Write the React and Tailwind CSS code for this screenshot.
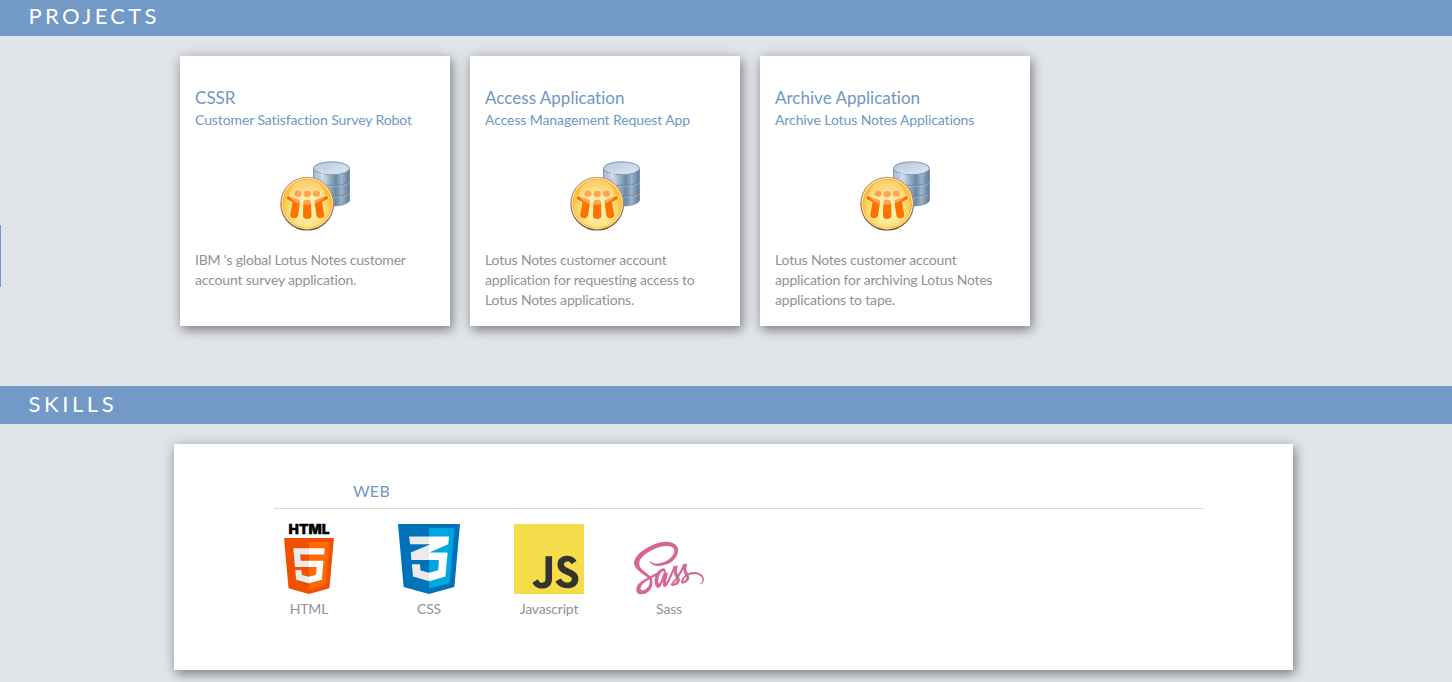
import { FaSass } from "react-icons/fa";
import { SiJavascript } from "react-icons/si";

const shadow = "shadow-[2px_4px_10px_rgba(0,0,0,0.4),0_0_16px_rgba(0,0,0,0.1)]";

function DatabaseIcon() {
  return (
    <svg viewBox="0 0 70 70" className="block size-[70px]">
      <defs>
        <linearGradient id="steel" x1="0" x2="1">
          <stop offset="0" stopColor="#a9bdd1" />
          <stop offset=".3" stopColor="#c5d6e5" />
          <stop offset=".62" stopColor="#6987a5" />
          <stop offset=".78" stopColor="#9db3c8" />
          <stop offset="1" stopColor="#5c7997" />
        </linearGradient>
        <linearGradient id="lid" x1="0" y1="0" x2="1" y2="1">
          <stop offset="0" stopColor="#b2c6da" />
          <stop offset="1" stopColor="#dcebf7" />
        </linearGradient>
        <radialGradient id="coin" cx=".5" cy=".65" r=".55">
          <stop offset="0" stopColor="#fffbd2" />
          <stop offset=".6" stopColor="#ffe27a" />
          <stop offset="1" stopColor="#fdbd35" />
        </radialGradient>
        <linearGradient id="rim" x1="0" y1="0" x2="0" y2="1">
          <stop offset="0" stopColor="#d6a06e" />
          <stop offset="1" stopColor="#7a4c22" />
        </linearGradient>
      </defs>
      <path d="M33.500 7.500V39c0 4 8 6 18 6s18-2.500 18-6V7.500z" fill="url(#steel)" stroke="#7d95ae" />
      <path d="M33.500 20c2 6 34 6 36 0M33.500 31c2 6 34 6 36 0" fill="none" stroke="#637e99" strokeWidth=".8" />
      <path d="M33.500 21c2 6 34 6 36 0M33.500 32c2 6 34 6 36 0" fill="none" stroke="#b3c5d6" strokeWidth=".6" />
      <ellipse cx="51.500" cy="7.300" rx="18" ry="6.500" fill="url(#lid)" stroke="#8195ac" />
      <path d="M42 9v9M38 13h8" stroke="#fff" strokeWidth=".8" opacity=".7" />
      <circle cx="27.200" cy="42.700" r="26.300" fill="#fff4cf" stroke="url(#rim)" strokeWidth="1.200" />
      <circle cx="27.200" cy="42.700" r="24.400" fill="url(#coin)" stroke="#f4ad27" strokeWidth=".8" />
      <g fill="#ff7200" stroke="#fff0b3" strokeWidth="1.400" paintOrder="stroke">
        <ellipse cx="18" cy="32.500" rx="3.700" ry="3.200" />
        <ellipse cx="27.200" cy="33" rx="3.700" ry="3.200" />
        <ellipse cx="36.400" cy="32.500" rx="3.700" ry="3.200" />
        <path d="M8.500 35c-2.500-.6-2.800 2.900-.8 3.700L12.500 41l-2.300 12.500c-.5 4.800 7.300 5.300 8 .5l2-14.500c-3-2-7-2.500-11.700-4.500z" />
        <path d="M46 35c2.500-.6 2.800 2.900.8 3.700L42 41l2.300 12.500c.5 4.800-7.300 5.300-8 .5l-2-14.500c3-2 7-2.500 11.700-4.500z" />
        <path d="M23.400 41c0-3.500 7.600-3.500 7.600 0l.5 14c0 4-8.600 4-8.600 0z" />
      </g>
      <path d="M9 35c1-10 8-16 18-16s17 6 18 16c-7 11-29 12-36 0z" fill="#fff3ca" opacity=".4" />
    </svg>
  );
}

function HtmlIcon() {
  return (
    <svg viewBox="0 0 50 70" className="block h-[70px] w-[50px] overflow-visible">
      <text x="4.500" y="9.500" fontFamily="Inter, sans-serif" fontSize="12.500" fontWeight="900" stroke="#000" strokeWidth=".3" textLength="41" lengthAdjust="spacingAndGlyphs">HTML</text>
      <g transform="translate(-3.330 14) scale(.11080 .10940)">
        <path d="M71 460L30 0h451l-41 460-185 52z" fill="#f05000" />
        <path d="M256 472l149-41 35-394H256z" fill="#ff6900" />
        <path d="M256 208h-75l-5-58h80V94H114l15 171h127zM256 355h-1l-63-17-4-45h-56l7 89 116 32h1z" fill="#ebebeb" />
        <path d="M255 208v57h70l-7 73-63 17v59l116-32 16-174zM255 94v56h137l5-56z" fill="#fff" />
      </g>
    </svg>
  );
}

function CssIcon() {
  const three =
    "M313.100 112l-4.800 47.300L193 208.600l-.3.100h111.500l-12.800 146.600-98.200 28.700-98.800-29.200-6.400-73.900h48.900l3.200 38.300 52.600 13.300 54.700-15.400 3.700-61.600-166.300-.5-3.800-46.300L193.100 162l6.500-2.700H76.700L70.900 112z";
  return (
    <svg viewBox="30 0 451 512" preserveAspectRatio="none" className="block h-[70px] w-[62px]">
      <defs>
        <linearGradient id="split" gradientUnits="userSpaceOnUse" x1="70" x2="314" y1="0" y2="0">
          <stop offset=".5" stopColor="#ebebeb" />
          <stop offset=".5" stopColor="#fff" />
        </linearGradient>
      </defs>
      <path d="M71 460L30 0h451l-41 460-185 52z" fill="#0071bb" />
      <path d="M256 472l149-41 35-401H256z" fill="#00a6e0" />
      <path d={three} transform="translate(25.600 -42.400) scale(1.200)" fill="url(#split)" />
    </svg>
  );
}

const projects = [
  { title: "CSSR", sub: "Customer Satisfaction Survey Robot", lines: ["IBM 's global Lotus Notes customer", "account survey application."] },
  { title: "Access Application", sub: "Access Management Request App", lines: ["Lotus Notes customer account", "application for requesting access to", "Lotus Notes applications."] },
  { title: "Archive Application", sub: "Archive Lotus Notes Applications", lines: ["Lotus Notes customer account", "application for archiving Lotus Notes", "applications to tape."] },
];

const skills = [
  { name: "HTML", icon: <HtmlIcon /> },
  { name: "CSS", icon: <CssIcon /> },
  { name: "Javascript", icon: <div className="bg-[#333330]"><SiJavascript className="block size-[70px] text-[#f5dc4b]" /></div> },
  { name: "Sass", icon: <FaSass className="-mb-[2px] block h-[56px] w-[70px] text-[#d76694]" /> },
];

export default function App() {
  return (
    <div className="relative h-[682px] w-full overflow-hidden bg-[#e1e4e9] font-[Lato,sans-serif]">
      <div className="absolute top-[225px] left-0 h-[62px] w-px bg-[#7399c6]" />
      <h2 className="h-9 bg-[#7399c6] pl-[28.5px] text-[22px] leading-[32px] tracking-[3.3px] text-white">PROJECTS</h2>
      <div className="mt-5 ml-[180px] flex gap-5">
        {projects.map((p) => (
          <article key={p.title} className={`flex size-[270px] flex-col bg-white px-[15px] pt-8 ${shadow}`}>
            <h3 className="text-[17px] leading-5 tracking-[0.02px] text-[#6f97c5]">{p.title}</h3>
            <h4 className="mt-[2px] text-[14px] leading-5 tracking-[-0.1px] text-[#6f97c5]">{p.sub}</h4>
            <div className="mt-[31px] flex justify-center"><DatabaseIcon /></div>
            <p className="mt-[19px] text-[14px] leading-5 tracking-[-0.18px] whitespace-nowrap text-[#929292]">
              {p.lines.map((l) => <span key={l} className="block">{l}</span>)}
            </p>
          </article>
        ))}
      </div>
      <h2 className="mt-[60px] h-[38px] bg-[#7399c6] pl-[28.5px] text-[22px] leading-[36px] tracking-[3.6px] text-white">SKILLS</h2>
      <section className={`mt-5 ml-[174px] h-[226px] w-[1119px] bg-white pt-[37px] pl-[100px] ${shadow}`}>
        <h3 className="h-7 w-[930px] border-b border-[#dbdbdb] pl-[79px] text-[16px] leading-5 tracking-[0.3px] text-[#6f97c5]">WEB</h3>
        <div className="mt-[15px] flex gap-[50px]">
          {skills.map((s) => (
            <div key={s.name} className="flex w-[70px] flex-col items-center">
              <div className="flex h-[70px] items-end">{s.icon}</div>
              <span className="mt-[5px] text-[14px] leading-5 tracking-[-0.2px] text-[#929292]">{s.name}</span>
            </div>
          ))}
        </div>
      </section>
    </div>
  );
}
